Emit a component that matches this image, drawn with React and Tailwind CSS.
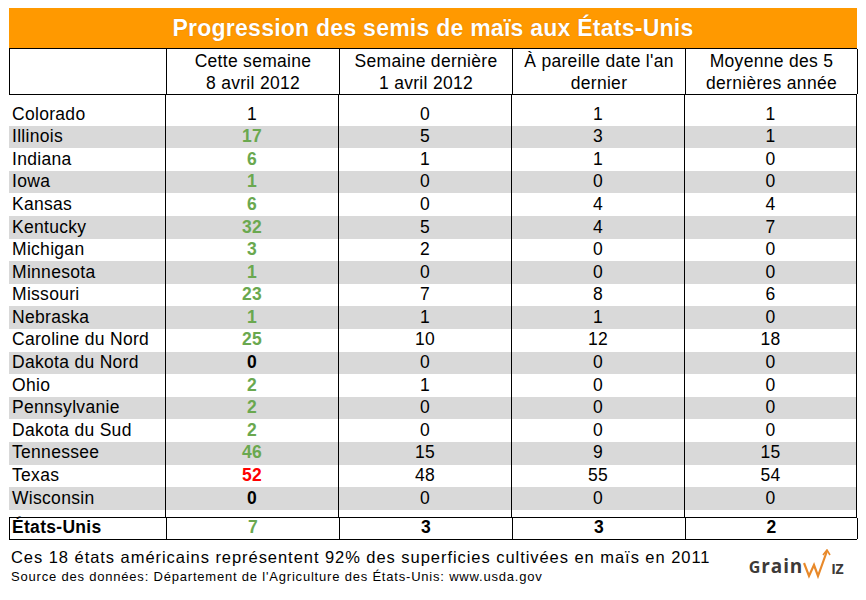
import React from "react";

const rows = [
  ["Colorado", "1", "0", "1", "1", "plain", false],
  ["Illinois", "17", "5", "3", "1", "green", true],
  ["Indiana", "6", "1", "1", "0", "green", false],
  ["Iowa", "1", "0", "0", "0", "green", true],
  ["Kansas", "6", "0", "4", "4", "green", false],
  ["Kentucky", "32", "5", "4", "7", "green", true],
  ["Michigan", "3", "2", "0", "0", "green", false],
  ["Minnesota", "1", "0", "0", "0", "green", true],
  ["Missouri", "23", "7", "8", "6", "green", false],
  ["Nebraska", "1", "1", "1", "0", "green", true],
  ["Caroline du Nord", "25", "10", "12", "18", "green", false],
  ["Dakota du Nord", "0", "0", "0", "0", "black", true],
  ["Ohio", "2", "1", "0", "0", "green", false],
  ["Pennsylvanie", "2", "0", "0", "0", "green", true],
  ["Dakota du Sud", "2", "0", "0", "0", "green", false],
  ["Tennessee", "46", "15", "9", "15", "green", true],
  ["Texas", "52", "48", "55", "54", "red", false],
  ["Wisconsin", "0", "0", "0", "0", "black", true],
];

const firstCls = {
  plain: "font-normal text-black",
  green: "font-bold text-[#6aa84f]",
  black: "font-bold text-black",
  red: "font-bold text-[#ff0000]",
};

function Spacer({ h }) {
  return (
    <div className={`grid grid-cols-[156px_173px_173px_173px_173px] ${h}`}>
      <div />
      <div className="border-l border-black" />
      <div className="border-l border-black" />
      <div className="border-l border-black" />
      <div className="border-l border-r border-black" />
    </div>
  );
}

export default function App() {
  return (
    <div className="w-[866px] h-[600px] bg-white font-['Liberation_Sans',Arial,sans-serif] text-black pt-[8px]">
      <div className="ml-[9px] w-[848px]">
        <div className="h-[40px] bg-[#ff9900] flex items-center justify-center pt-[1px]">
          <span className="text-white font-bold text-[23px] tracking-[0.25px] leading-none [text-shadow:0_0_1px_rgba(140,70,0,0.55)]">
            Progression des semis de maïs aux États-Unis
          </span>
        </div>

        <div className="grid grid-cols-[156px_173px_173px_173px_173px] h-[47px] border-t border-b border-l border-black text-[17.5px] tracking-[0.3px] leading-[22px] text-center">
          <div />
          <div className="border-l border-black flex items-center justify-center">
            <span>Cette semaine<br />8 avril 2012</span>
          </div>
          <div className="border-l border-black flex items-center justify-center">
            <span>Semaine dernière<br />1 avril 2012</span>
          </div>
          <div className="border-l border-black flex items-center justify-center">
            <span>À pareille date l'an<br />dernier</span>
          </div>
          <div className="border-l border-r border-black flex items-center justify-center">
            <span>Moyenne des 5<br />dernières année</span>
          </div>
        </div>

        <Spacer h="h-[8px]" />

        {rows.map(([name, a, b, c, d, kind, gray]) => (
          <div
            key={name}
            className={`grid grid-cols-[156px_173px_173px_173px_173px] h-[22.6px] text-[17.5px] tracking-[0.3px] leading-none ${gray ? "bg-[#d9d9d9]" : "bg-white"}`}
          >
            <div className="flex items-center pl-[3px]">{name}</div>
            <div className={`border-l border-black flex items-center justify-center ${firstCls[kind]}`}>{a}</div>
            <div className="border-l border-black flex items-center justify-center">{b}</div>
            <div className="border-l border-black flex items-center justify-center">{c}</div>
            <div className="border-l border-r border-black flex items-center justify-center">{d}</div>
          </div>
        ))}

        <Spacer h="h-[7px]" />

        <div className="grid grid-cols-[156px_173px_173px_173px_173px] h-[23px] border-t-[1.5px] border-b-[1.5px] border-l-[1.5px] border-black text-[17.5px] tracking-[0.3px] leading-none font-bold">
          <div className="flex items-center pl-[2px]">États-Unis</div>
          <div className="border-l border-black flex items-center justify-center text-[#6aa84f]">7</div>
          <div className="border-l border-black flex items-center justify-center">3</div>
          <div className="border-l border-black flex items-center justify-center">3</div>
          <div className="border-l border-r border-black flex items-center justify-center">2</div>
        </div>

        <div className="flex items-start justify-between pt-[8px]">
          <div className="pl-[2px]">
            <div className="text-[16.5px] tracking-[0.95px] leading-[18px] whitespace-nowrap">
              Ces 18 états américains représentent 92% des superficies cultivées en maïs en 2011
            </div>
            <div className="text-[13px] tracking-[0.8px] leading-[16px] mt-[3px] whitespace-nowrap">
              Source des données: Département de l'Agriculture des États-Unis: www.usda.gov
            </div>
          </div>
          <div className="flex items-end mr-[14px] mt-[1px] h-[30px] text-[#3d3a38] font-['Open_Sans',sans-serif] font-bold leading-none">
            <span className="pb-[3px] flex items-baseline tracking-[0.9px]">
              <span className="text-[16px]">G</span>
              <span className="text-[19px]">rain</span>
            </span>
            <svg width="28" height="30" viewBox="0 0 28 30">
              <polyline
                points="1,14 6,27 11,16 15,27 24,2"
                fill="none"
                stroke="#e8892a"
                strokeWidth="2.2"
                strokeLinejoin="miter"
              />
              <polyline points="20,6 24,1 27,6" fill="none" stroke="#e8892a" strokeWidth="1.6" />
            </svg>
            <span className="pb-[3px] text-[14px] tracking-[-0.5px]">IZ</span>
          </div>
        </div>
      </div>
    </div>
  );
}
